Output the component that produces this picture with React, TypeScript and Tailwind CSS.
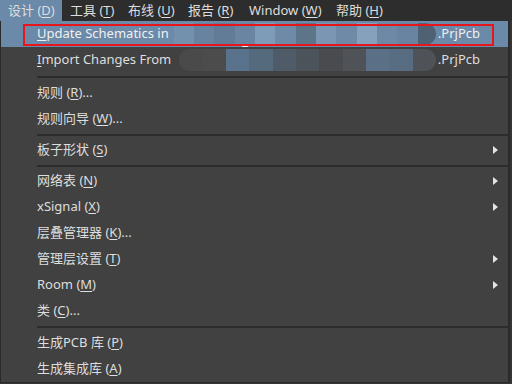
import React from 'react';

type Item =
  | { kind: 'item'; label: string; key: string; tail?: string; sub?: boolean }
  | { kind: 'sep'; h: string };

const MENUBAR = [
  { label: '设计', key: 'D', w: 'w-[62px]', active: true },
  { label: '工具', key: 'T', w: 'w-[58px]' },
  { label: '布线', key: 'U', w: 'w-[60px]' },
  { label: '报告', key: 'R', w: 'w-[61px]' },
  { label: 'Window', key: 'W', w: 'w-[87px]' },
  { label: '帮助', key: 'H', w: 'w-[60px]' },
];

const ITEMS: Item[] = [
  { kind: 'sep', h: 'h-[7px]' },
  { kind: 'item', label: '规则', key: 'R', tail: '...' },
  { kind: 'item', label: '规则向导', key: 'W', tail: '...' },
  { kind: 'sep', h: 'h-[5px]' },
  { kind: 'item', label: '板子形状', key: 'S', sub: true },
  { kind: 'sep', h: 'h-[5px]' },
  { kind: 'item', label: '网络表', key: 'N', sub: true },
  { kind: 'item', label: 'xSignal', key: 'X', sub: true },
  { kind: 'item', label: '层叠管理器', key: 'K', tail: '...' },
  { kind: 'item', label: '管理层设置', key: 'T', sub: true },
  { kind: 'item', label: 'Room', key: 'M', sub: true },
  { kind: 'item', label: '类', key: 'C', tail: '...' },
  { kind: 'sep', h: 'h-[6px]' },
  { kind: 'item', label: '生成PCB 库', key: 'P' },
  { kind: 'item', label: '生成集成库', key: 'A' },
];

// pixelated blur over the file path
const BLUR_HI = ['#7390ad', '#6883a0', '#627c97', '#6a85a1', '#7e9bb8', '#6f8aa7', '#5d7489', '#7a96b3', '#6f8aa7', '#86a1bb', '#6d89a5', '#6884a0'];
const BLUR_LO = ['#4a4a4a', '#4c4c4c', '#5a738c', '#566a7e', '#4f5b68', '#4d535a', '#494b4e', '#4f5256', '#5b7087', '#586d82', '#4f5257'];

const Key = ({ k }: { k: string }) => (
  <span>
    (<span className="underline underline-offset-2 decoration-1">{k}</span>)
  </span>
);

const Arrow = () => (
  <span className="ml-auto mr-[10px] w-0 h-0 border-y-[4px] border-y-transparent border-l-[5px] border-l-[#e4e4e4]" />
);

export default function App() {
  return (
    <div
      className="w-[512px] h-[384px] bg-[#363636] text-[13px] text-[#dedede] overflow-hidden"
      style={{ fontFamily: '"Noto Sans", "Noto Sans CJK SC", sans-serif' }}
    >
      {/* menu bar */}
      <div className="h-[21px] bg-[#2d2d2d] flex items-center">
        {MENUBAR.map((m) => (
          <div
            key={m.key}
            className={`${m.w} h-full flex items-center pl-[8px] whitespace-nowrap ${m.active ? 'bg-[#6b89a8]' : ''}`}
          >
            {m.label}&nbsp;<Key k={m.key} />
          </div>
        ))}
      </div>

      {/* dropdown */}
      <div className="w-[510px] h-[362px] bg-[#414141] border-l border-r-2 border-b border-[#2a2a2a]">
        {/* highlighted row */}
        <div className="relative h-[26px] bg-[#6b89a8] flex items-center pl-[36px] pr-[28px] text-[#f0f0f0] whitespace-nowrap">
          <span>
            <span className="underline underline-offset-2 decoration-1">U</span>pdate Schematics in
          </span>
          <div className="flex-1 flex h-[22px] ml-[5px] mr-[2px]">
            {BLUR_HI.map((c, i) => (
              <div key={i} className="flex-1 flex items-end justify-center text-white leading-[10px]" style={{ background: c }}>
                {i === 3 ? '_' : ''}
              </div>
            ))}
            <div className="w-[18px] rounded-r-full bg-[#4f6274]" />
          </div>
          <span>.PrjPcb</span>
          <div className="absolute left-[22px] top-[3px] w-[471px] h-[22px] border-2 border-[#e8161c]" />
        </div>

        {/* import row */}
        <div className="h-[26px] flex items-center pl-[36px] pr-[28px] whitespace-nowrap">
          <span>
            <span className="underline underline-offset-2 decoration-1">I</span>mport Changes From
          </span>
          <div className="flex-1 flex h-[22px] ml-[8px] mr-[2px] rounded-l-full rounded-r-full overflow-hidden">
            {BLUR_LO.map((c, i) => (
              <div key={i} className="flex-1" style={{ background: c }} />
            ))}
          </div>
          <span>.PrjPcb</span>
        </div>

        {ITEMS.map((it, i) =>
          it.kind === 'sep' ? (
            <div key={i} className={`${it.h} flex items-center pl-[36px]`}>
              <div className="w-full h-[2px] bg-[#2c2c2c]" />
            </div>
          ) : (
            <div key={i} className="h-[26px] flex items-center pl-[36px] whitespace-nowrap">
              <span>
                {it.label} <Key k={it.key} />
                {it.tail}
              </span>
              {it.sub && <Arrow />}
            </div>
          )
        )}
      </div>
    </div>
  );
}
